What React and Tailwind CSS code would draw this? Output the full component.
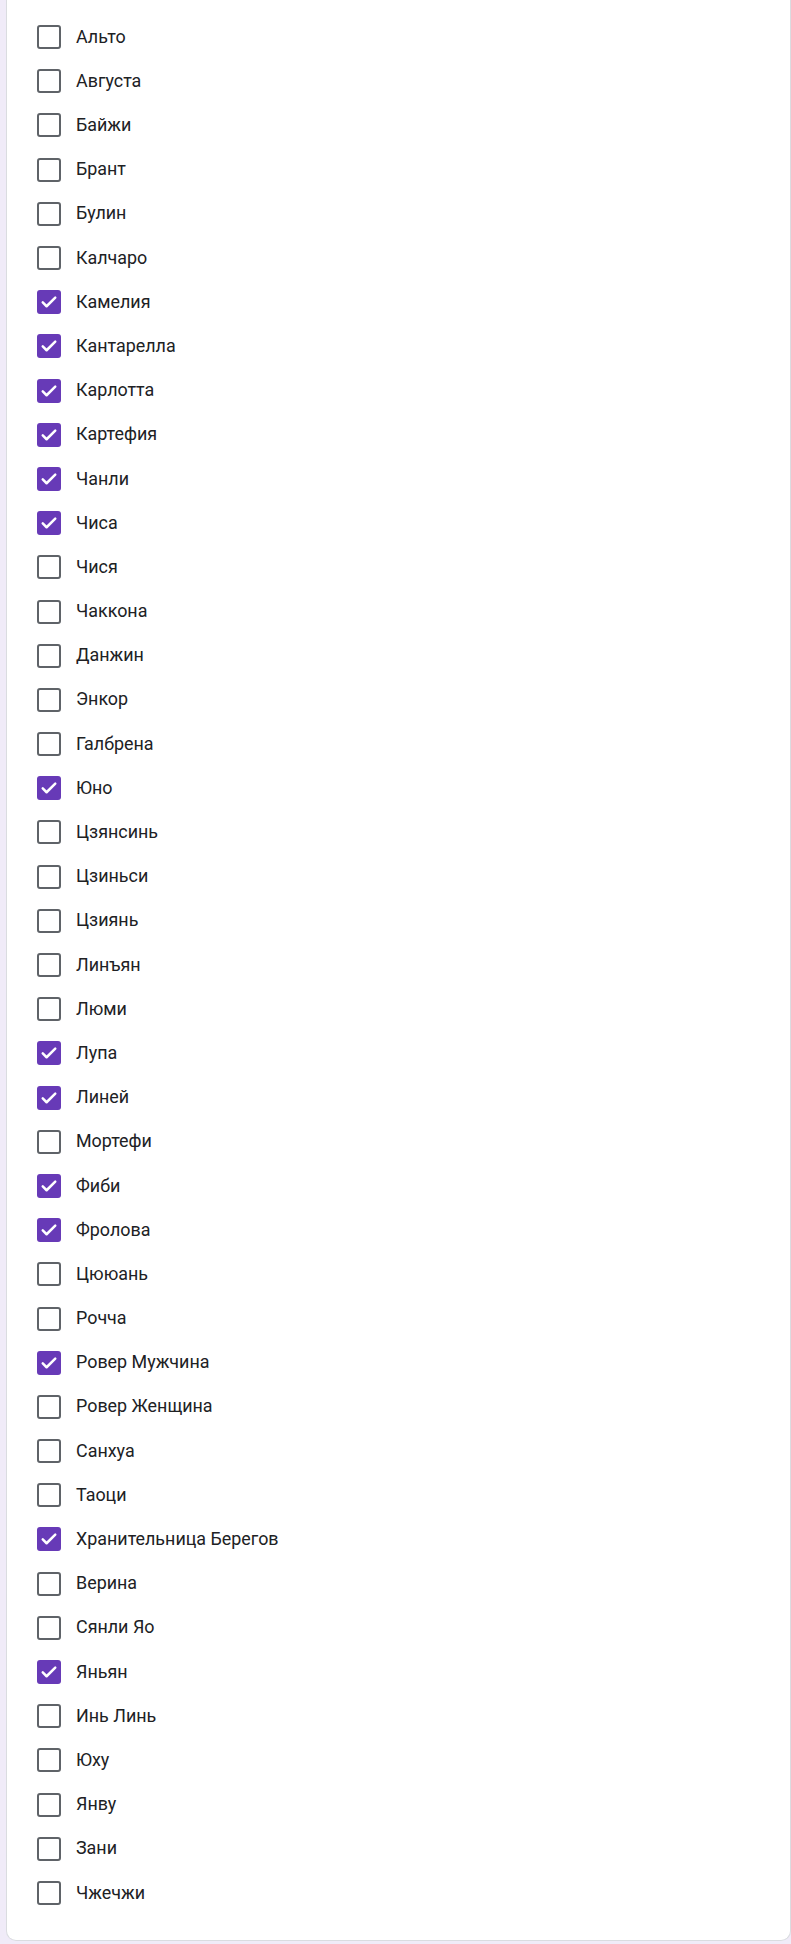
import React from 'react';

const items = [
    ['Альто', false], ['Августа', false], ['Байжи', false], ['Брант', false], ['Булин', false],
    ['Калчаро', false], ['Камелия', true], ['Кантарелла', true], ['Карлотта', true], ['Картефия', true],
    ['Чанли', true], ['Чиса', true], ['Чися', false], ['Чаккона', false], ['Данжин', false],
    ['Энкор', false], ['Галбрена', false], ['Юно', true], ['Цзянсинь', false], ['Цзиньси', false],
    ['Цзиянь', false], ['Линъян', false], ['Люми', false], ['Лупа', true], ['Линей', true],
    ['Мортефи', false], ['Фиби', true], ['Фролова', true], ['Цююань', false], ['Рочча', false],
    ['Ровер Мужчина', true], ['Ровер Женщина', false], ['Санхуа', false], ['Таоци', false],
    ['Хранительница Берегов', true], ['Верина', false], ['Сянли Яо', false], ['Яньян', true],
    ['Инь Линь', false], ['Юху', false], ['Янву', false], ['Зани', false], ['Чжечжи', false],
];

const Checkbox = ({ checked }) => {
    if (checked) {
        return (
            <div className="w-[24px] h-[24px] rounded-[3px] bg-[#673ab7] flex items-center justify-center">
                <svg width="20" height="20" viewBox="0 0 24 24" fill="none">
                    <path d="M4.5 12.5l4.6 4.6L19.5 6.8" stroke="white" strokeWidth="3" strokeLinecap="round" strokeLinejoin="round" />
                </svg>
            </div>
        );
    }
    return <div className="w-[24px] h-[24px] rounded-[3px] border-[2.5px] border-[#5f6368] bg-white"></div>;
};

const App = () => {
    return (
        <div className="min-h-[1944px] bg-[#f0ebf8] pl-[6px] pb-[3px]" style={{ fontFamily: 'Roboto, "Liberation Sans", sans-serif' }}>
            <div className="bg-white border border-t-0 border-[#dadce0] rounded-b-[10px] pt-[15px] pb-[25px]">
                {items.map(([name, checked]) => (
                    <div key={name} className="h-[44.2px] flex items-center pl-[30px]">
                        <Checkbox checked={checked} />
                        <span className="ml-[15px] text-[17.9px] text-[#202124]">{name}</span>
                    </div>
                ))}
            </div>
        </div>
    );
};

export default App;
